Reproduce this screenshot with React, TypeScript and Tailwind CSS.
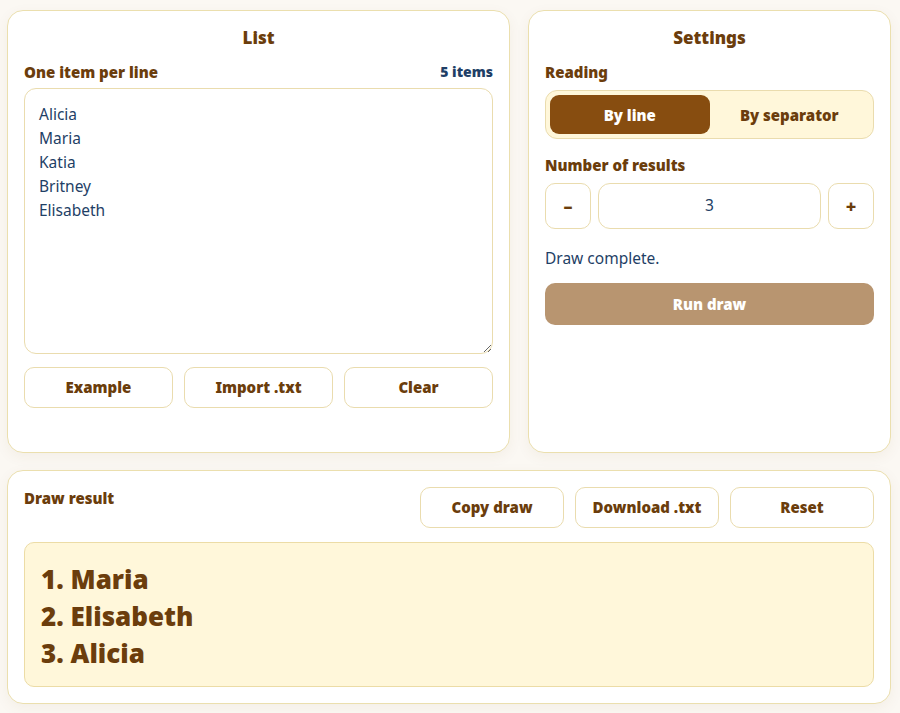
import React from "react";

const font = { fontFamily: '"Noto Sans", "Open Sans", sans-serif' };

function OutlineBtn({ children, className = "" }: { children: React.ReactNode; className?: string }) {
  return (
    <button
      className={
        "h-[41px] rounded-[10px] border border-[#eadcae] bg-white text-[15px] font-black text-[#6b3d0c] " +
        className
      }
    >
      {children}
    </button>
  );
}

export default function App() {
  const items = "Alicia\nMaria\nKatia\nBritney\nElisabeth";
  return (
    <div style={font} className="min-h-[713px] w-[900px] bg-[#fbf8f3] pl-[7px] pr-[9px] pt-[10px] pb-[10px]">
      <div className="flex gap-[18px]">
        {/* List card */}
        <div className="flex h-[443px] w-[503px] flex-col rounded-[16px] border border-[#ebdfae] bg-white px-4 pt-[15px] shadow-[0_4px_14px_rgba(120,90,30,0.06)]">
          <h2 className="text-center text-[17px] font-black leading-[24px] text-[#6b3d0c]">List</h2>
          <div className="mt-[12px] flex items-center justify-between">
            <span className="text-[15px] font-black leading-[20px] text-[#6b3d0c]">One item per line</span>
            <span className="text-[14px] font-black leading-[20px] text-[#1f3f66]">5 items</span>
          </div>
          <textarea
            defaultValue={items}
            className="mt-[6px] h-[266px] w-full resize-y rounded-[12px] border border-[#eadcae] bg-white px-[14px] py-[13px] text-[15.5px] leading-[24px] text-[#1f3f66] outline-none"
            style={font}
          />
          <div className="mt-[13px] grid grid-cols-3 gap-[11px]">
            <OutlineBtn>Example</OutlineBtn>
            <OutlineBtn>Import .txt</OutlineBtn>
            <OutlineBtn>Clear</OutlineBtn>
          </div>
        </div>

        {/* Settings card */}
        <div className="flex h-[443px] flex-1 flex-col rounded-[16px] border border-[#ebdfae] bg-white px-4 pt-[15px] shadow-[0_4px_14px_rgba(120,90,30,0.06)]">
          <h2 className="text-center text-[17px] font-black leading-[24px] text-[#6b3d0c]">Settings</h2>
          <div className="mt-[12px] text-[15px] font-black leading-[20px] text-[#6b3d0c]">Reading</div>
          <div className="mt-[8px] flex h-[49px] rounded-[12px] border border-[#eadcae] bg-[#fff7da] p-[4px]">
            <button className="flex-1 rounded-[9px] bg-[#874d10] pt-[2px] text-[15px] font-black text-white">By line</button>
            <button className="flex-1 rounded-[9px] pt-[2px] text-[15px] font-black text-[#6b3d0c]">By separator</button>
          </div>
          <div className="mt-[16px] text-[15px] font-black leading-[20px] text-[#6b3d0c]">Number of results</div>
          <div className="mt-[8px] flex h-[46px] gap-[7px]">
            <button className="w-[46px] rounded-[10px] border border-[#eadcae] bg-white text-[18px] font-black text-[#6b3d0c]">
              –
            </button>
            <div className="flex flex-1 items-center justify-center rounded-[12px] border border-[#eadcae] bg-white text-[15.5px] text-[#1f3f66]">
              3
            </div>
            <button className="w-[46px] rounded-[10px] border border-[#eadcae] bg-white text-[18px] font-black text-[#6b3d0c]">
              +
            </button>
          </div>
          <div className="mt-[18px] text-[15.5px] leading-[22px] text-[#1f3f66]">Draw complete.</div>
          <button className="mt-[14px] h-[42px] w-full rounded-[10px] bg-[#b89570] text-[15px] font-black text-white">
            Run draw
          </button>
        </div>
      </div>

      {/* Result card */}
      <div className="mt-[17px] flex h-[234px] flex-col rounded-[16px] border border-[#ebdfae] bg-white px-4 pt-[16px] shadow-[0_4px_14px_rgba(120,90,30,0.06)]">
        <div className="flex items-start justify-between">
          <div className="pt-[1px] text-[15px] font-black leading-[20px] text-[#6b3d0c]">Draw result</div>
          <div className="flex gap-[11px]">
            <OutlineBtn className="w-[144px]">Copy draw</OutlineBtn>
            <OutlineBtn className="w-[144px]">Download .txt</OutlineBtn>
            <OutlineBtn className="w-[144px]">Reset</OutlineBtn>
          </div>
        </div>
        <div className="mt-[14px] h-[145px] rounded-[10px] border border-[#ecdca6] bg-[#fff7da] px-[16px] pt-[18px]">
          <ol className="text-[26px] font-black leading-[37px] text-[#6b3d0c]">
            <li>1. Maria</li>
            <li>2. Elisabeth</li>
            <li>3. Alicia</li>
          </ol>
        </div>
      </div>
    </div>
  );
}
